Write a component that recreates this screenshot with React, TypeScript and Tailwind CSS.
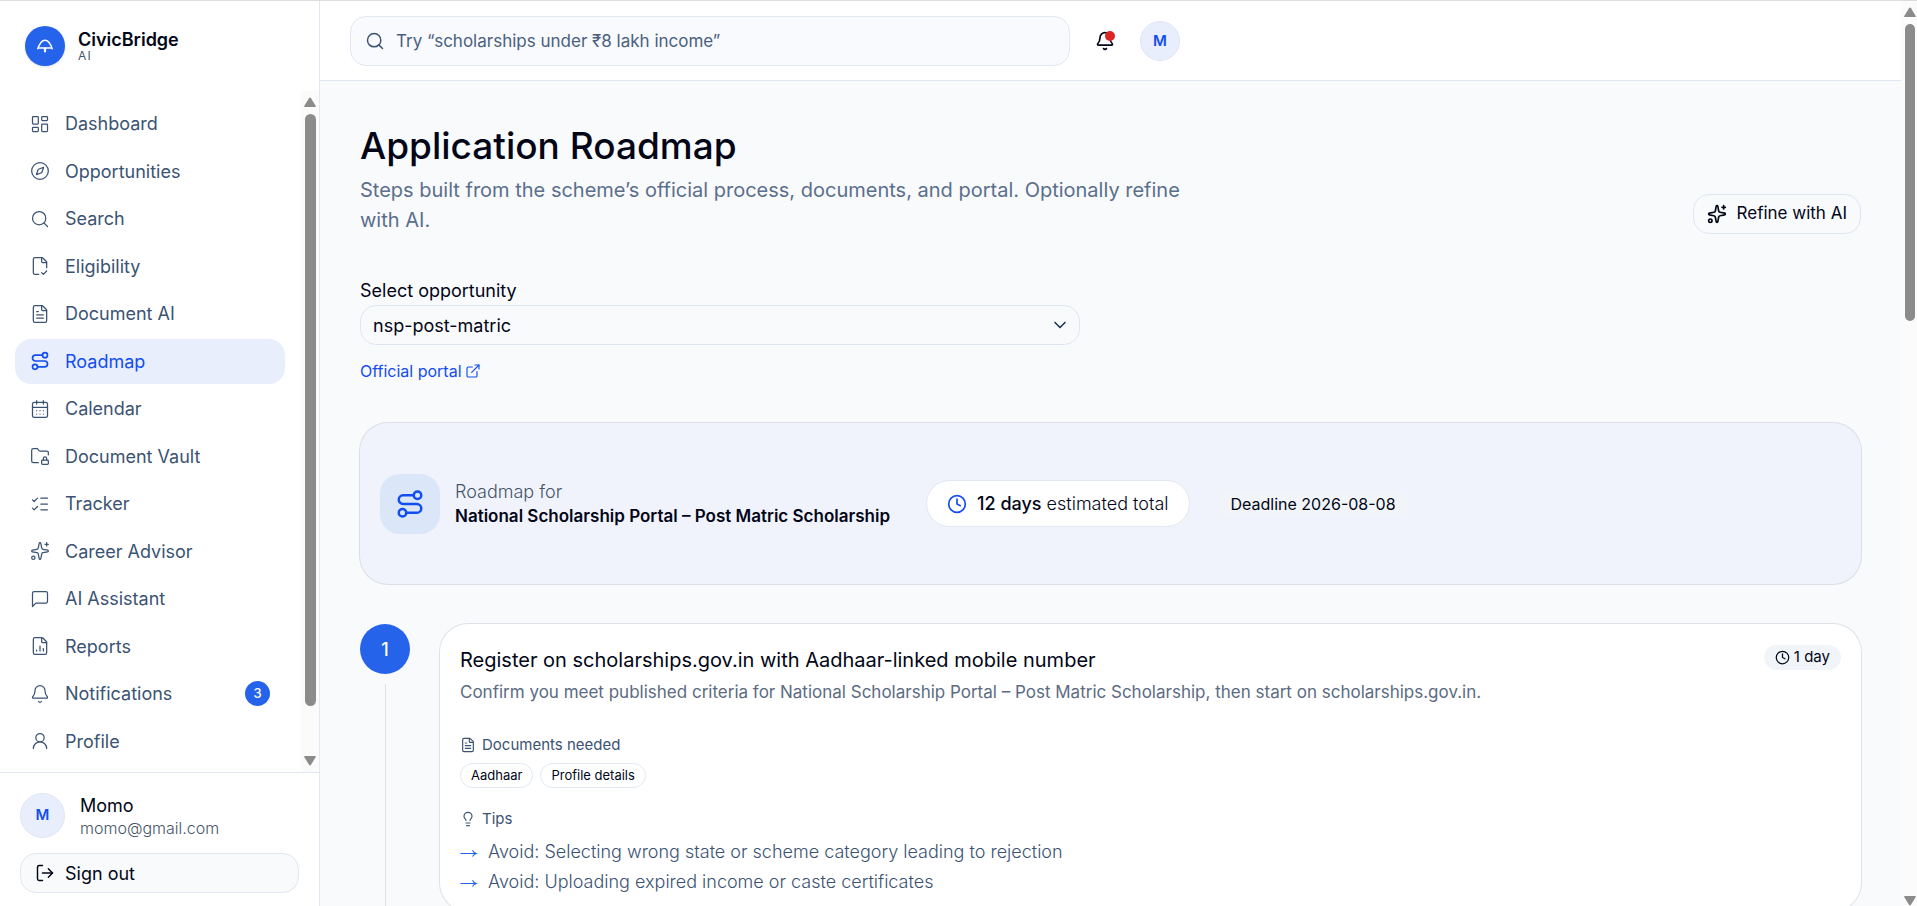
import type { ReactNode } from 'react';
import {
  Bell, CalendarDays, ChevronDown, Clock, Compass, ExternalLink, FileChartColumn, FileCheckCorner, FileText,
  FolderLock, LayoutDashboard, Lightbulb, ListChecks, LogOut, Route, Search, Sparkles, UserRound,
  type LucideIcon,
} from 'lucide-react';

type IconType = LucideIcon | ((props: { className?: string; strokeWidth?: number }) => ReactNode);

function ChatSquare({ className, strokeWidth = 2 }: { className?: string; strokeWidth?: number }) {
  return (
    <svg className={className} viewBox="0 0 24 24" fill="none" stroke="currentColor" strokeWidth={strokeWidth} strokeLinecap="round" strokeLinejoin="round" aria-hidden="true">
      <path d="M21 15a2 2 0 0 1-2 2H7l-4 4V5a2 2 0 0 1 2-2h14a2 2 0 0 1 2 2z" />
    </svg>
  );
}

function Logo() {
  return (
    <svg className="size-5" viewBox="0 0 20 20" fill="none" stroke="currentColor" strokeWidth="1.5" strokeLinecap="round" strokeLinejoin="round" aria-hidden="true">
      <path d="M2.800 12.800C4.400 8 6.800 4.200 10 4.200s5.600 3.800 7.200 8.600" />
      <path d="M4 11.900h12" />
      <path d="M10 12.500v3" strokeWidth="2.200" />
    </svg>
  );
}

function LongArrow() {
  return (
    <svg className="mt-2.5 h-2 w-[18px] shrink-0 text-[#2563eb]" viewBox="0 0 18 8" fill="none" stroke="currentColor" strokeWidth="1.1" aria-hidden="true">
      <path d="M.5 4.500h15.500M12.500 1.200c.8 1.700 2 2.800 3.800 3.300-1.800.5-3 1.500-3.800 3.100" />
    </svg>
  );
}

const navItems: { label: string; icon: IconType; active?: boolean; count?: number }[] = [
  { label: 'Dashboard', icon: LayoutDashboard },
  { label: 'Opportunities', icon: Compass },
  { label: 'Search', icon: Search },
  { label: 'Eligibility', icon: FileCheckCorner },
  { label: 'Document AI', icon: FileText },
  { label: 'Roadmap', icon: Route, active: true },
  { label: 'Calendar', icon: CalendarDays },
  { label: 'Document Vault', icon: FolderLock },
  { label: 'Tracker', icon: ListChecks },
  { label: 'Career Advisor', icon: Sparkles },
  { label: 'AI Assistant', icon: ChatSquare },
  { label: 'Reports', icon: FileChartColumn },
  { label: 'Notifications', icon: Bell, count: 3 },
  { label: 'Profile', icon: UserRound },
];

function Arrow({ down = false }: { down?: boolean }) {
  return (
    <svg className="h-2.5 w-3 shrink-0" viewBox="0 0 12 10" fill="#8b8b8b" aria-hidden="true">
      {down ? <path d="M1 0h10q1.300 0 .6 1.200L7 8.800q-1 1.400-2 0L.4 1.200Q-.3 0 1 0z" /> : <path d="M1 10h10q1.300 0 .6-1.200L7 1.200q-1-1.400-2 0L.4 8.800Q-.3 10 1 10z" />}
    </svg>
  );
}

function Sidebar() {
  return (
    <aside className="flex w-80 shrink-0 flex-col border-r border-[#e2e8f0] bg-white">
      <div className="flex h-[90px] shrink-0 items-center gap-[13px] px-[25px]">
        <div className="flex size-10 items-center justify-center rounded-full bg-[#2563eb] text-white shadow-sm">
          <Logo />
        </div>
        <div>
          <p className="text-[18px] leading-5 font-semibold">CivicBridge</p>
          <p className="text-[12px] leading-3 tracking-widest text-[#475569]">AI</p>
        </div>
      </div>
      <div className="flex min-h-0 flex-1">
        <nav aria-label="Main" className="flex flex-1 flex-col justify-between pt-2.5 pr-4 pb-2 pl-[15px]">
          {navItems.map(({ label, icon: Icon, active, count }) => (
            <a
              key={label}
              href="#"
              aria-current={active ? 'page' : undefined}
              className={
                active
                  ? 'flex h-[45px] items-center gap-[15px] rounded-2xl bg-[#e9eefd] px-[15px] text-[18px] text-[#124df0]'
                  : 'flex h-[45px] items-center gap-[15px] rounded-2xl px-[15px] text-[18px] text-[#3b5373]'
              }
            >
              <Icon className="size-5" strokeWidth={active ? 2 : 1.5} />
              <span className="flex-1">{label}</span>
              {count && (
                <span className="flex size-[25px] items-center justify-center rounded-full bg-[#2563eb] text-[13px] font-medium text-white">{count}</span>
              )}
            </a>
          ))}
        </nav>
        <div aria-hidden="true" className="flex w-[18px] flex-col items-center bg-[#fbfbfb] py-1.5">
          <Arrow />
          <div className="mt-[7px] mb-[50px] w-[11px] flex-1 rounded-full bg-[#8b8b8b]" />
          <Arrow down />
        </div>
      </div>
      <div className="flex flex-col gap-[15px] border-t border-[#e2e8f0] px-5 pt-5 pb-[13px]">
        <div className="flex items-center gap-[15px]">
          <div className="flex size-[45px] items-center justify-center rounded-full border border-[#dfe6f3] bg-[#e9eefd] text-[15px] font-semibold text-[#124df0]">M</div>
          <div>
            <p className="text-[18px] leading-6">Momo</p>
            <p className="text-[16px] leading-5 font-light text-[#475569]">momo@gmail.com</p>
          </div>
        </div>
        <button type="button" className="flex h-10 items-center gap-2.5 rounded-2xl border border-[#e2e8f0] bg-[#f8fafc] px-3.5 text-[18px]">
          <LogOut className="size-5" strokeWidth={1.75} />
          Sign out
        </button>
      </div>
    </aside>
  );
}

function Step() {
  return (
    <li className="flex gap-[30px]">
      <div className="flex w-[50px] shrink-0 flex-col items-center gap-2.5">
        <div className="flex size-[50px] items-center justify-center rounded-full bg-[#2563eb] text-[18px] font-medium text-white">1</div>
        <div className="w-px flex-1 bg-[#dde3ec]" />
      </div>
      <article className="flex-1 rounded-[28px] bg-white px-5 pt-[21px] pb-4 ring-1 ring-[#dfe2e8]">
        <div className="flex items-start justify-between">
          <h2 className="text-[20px] leading-[30px]">Register on scholarships.gov.in with Aadhaar-linked mobile number</h2>
          <span className="flex h-[25px] items-center gap-1 rounded-full bg-[#f1f5f9] px-[11px] text-[15px]">
            <Clock className="size-[15px]" />1 day
          </span>
        </div>
        <p className="mt-1 text-[17px] leading-[26px] text-[#5b6b82]">
          Confirm you meet published criteria for National Scholarship Portal – Post Matric Scholarship, then start on scholarships.gov.in.
        </p>
        <h3 className="mt-[30px] flex items-center gap-1.5 text-[15px] leading-5 text-[#3b5373]">
          <FileText className="size-4" strokeWidth={1.75} />
          Documents needed
        </h3>
        <div className="mt-2 flex gap-[7px]">
          <span className="flex h-[25px] items-center rounded-full border border-[#e2e8f0] px-2.5 text-[13px]">Aadhaar</span>
          <span className="flex h-[25px] items-center rounded-full border border-[#e2e8f0] px-2.5 text-[13px]">Profile details</span>
        </div>
        <h3 className="mt-[21px] flex items-center gap-1.5 text-[15px] leading-5 text-[#3b5373]">
          <Lightbulb className="size-4" strokeWidth={1.75} />
          Tips
        </h3>
        <ul className="mt-2.5 text-[18px] leading-[26px] font-light text-[#3b5373]">
          <li className="flex gap-2.5"><LongArrow />Avoid: Selecting wrong state or scheme category leading to rejection</li>
          <li className="mt-1 flex gap-2.5"><LongArrow />Avoid: Uploading expired income or caste certificates</li>
        </ul>
      </article>
    </li>
  );
}

export default function App() {
  return (
    <div className="flex h-screen overflow-hidden border-t border-[#dddddd] bg-[#f9fafc] font-['Inter','Noto_Sans',sans-serif] text-[#020617]">
      <Sidebar />
      <div className="flex min-w-0 flex-1 flex-col">
        <header className="flex h-20 shrink-0 items-center border-b border-[#dfe7f3] bg-white px-[30px] pt-px">
          <label className="flex h-[50px] w-full max-w-[720px] items-center gap-[11px] rounded-2xl border border-[#e2e8f0] bg-[#f8fafd] px-3.5">
            <Search className="size-5 shrink-0 text-[#3b5373]" strokeWidth={1.75} />
            <input aria-label="Search" className="w-full bg-transparent pt-0.5 text-[17px] outline-none placeholder:text-[#4a6080]" placeholder="Try “scholarships under ₹8 lakh income”" />
          </label>
          <button type="button" aria-label="Notifications" className="relative ml-[15px] flex size-10 items-center justify-center">
            <Bell className="size-5" />
            <span className="absolute top-2.5 right-2.5 size-2.5 rounded-full bg-[#dc2626]" />
          </button>
          <button type="button" aria-label="Account" className="ml-[15px] flex size-10 items-center justify-center rounded-full border border-[#dfe6f3] bg-[#e9eefd] text-[15px] font-semibold text-[#124df0]">M</button>
        </header>
        <main className="min-h-0 flex-1 overflow-hidden px-10 pt-10">
          <div className="flex items-end justify-between">
            <div className="max-w-[840px]">
              <h1 className="text-[37px] leading-[50px] font-medium">Application Roadmap</h1>
              <p className="mt-1 text-[20px] leading-[30px] text-[#5a6f8c]">
                Steps built from the scheme’s official process, documents, and portal. Optionally refine with AI.
              </p>
            </div>
            <button type="button" className="mb-px flex h-10 items-center gap-2.5 rounded-2xl border border-[#dfe6f3] px-[13px] text-[17px]">
              <Sparkles className="size-5" />
              Refine with AI
            </button>
          </div>
          <div className="mt-[42px] flex flex-col items-start">
            <label htmlFor="opportunity" className="text-[18px] leading-7">Select opportunity</label>
            <div className="relative w-full max-w-[720px]">
              <select id="opportunity" className="h-10 w-full appearance-none rounded-2xl border border-[#dfe6f3] bg-transparent px-3 text-[18px]">
                <option>nsp-post-matric</option>
              </select>
              <ChevronDown className="pointer-events-none absolute top-2.5 right-2.5 size-5 text-[#1e3a5f]" />
            </div>
            <a href="#" className="mt-4 flex items-center gap-[3px] text-[16px] leading-5 text-[#124df0]">
              Official portal
              <ExternalLink className="size-4" strokeWidth={1.75} />
            </a>
          </div>
          <section className="mt-[42px] flex h-[161px] items-center rounded-[28px] bg-[#f0f3fc] px-5 ring-1 ring-[#dcdfe6]">
            <div className="flex size-[60px] items-center justify-center rounded-[20px] bg-[#dbe6f8] text-[#124df0]">
              <Route className="size-[30px]" />
            </div>
            <div className="ml-[15px]">
              <p className="text-[18px] leading-[25px] font-light text-[#475569]">Roadmap for</p>
              <p className="text-[17px] leading-[25px] font-semibold">National Scholarship Portal – Post Matric Scholarship</p>
            </div>
            <div className="ml-9 flex h-[47px] items-center gap-2.5 rounded-full border border-[#e2e8f0] bg-white px-5 text-[18px]">
              <Clock className="size-5 text-[#124df0]" />
              <p className="font-light"><strong className="font-medium">12 days</strong> estimated total</p>
            </div>
            <span className="ml-[30px] flex h-[25px] items-center rounded-full bg-[#f1f5f9] px-[11px] text-[16px]">Deadline 2026-08-08</span>
          </section>
          <ol className="mt-10">
            <Step />
          </ol>
        </main>
      </div>
      <div aria-hidden="true" className="flex w-4 shrink-0 flex-col items-center bg-[#fbfbfb] pt-1.5 pl-0.5">
        <Arrow />
        <div className="mt-[7px] h-[33%] w-2.5 shrink-0 rounded-full bg-[#8b8b8b]" />
        <div className="flex-1" />
        <Arrow down />
      </div>
    </div>
  );
}
